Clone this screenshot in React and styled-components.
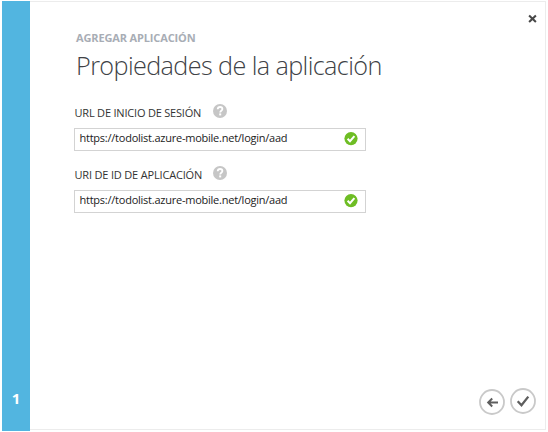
import React from "react";
import styled, { createGlobalStyle } from "styled-components";

const GlobalStyle = createGlobalStyle`
  * { box-sizing: border-box; }
  body { margin: 0; background: #fff; font-family: "Open Sans", "Noto Sans", sans-serif; }
`;

const Page = styled.div`
  width: 548px;
  height: 432px;
  padding: 1px 1px 1px 2px;
  display: flex;
  overflow: hidden;
`;

const StepRail = styled.aside`
  width: 28px;
  height: 430px;
  display: flex;
  flex-direction: column;
  justify-content: flex-end;
  align-items: center;
  padding-bottom: 23px;
  background: #52b5e0;
`;

const StepNumber = styled.span`
  font-family: "Noto Sans", sans-serif;
  font-size: 15px;
  line-height: 20px;
  font-weight: 700;
  color: #fff;
`;

const Dialog = styled.main`
  width: 516px;
  height: 429px;
  display: flex;
  flex-direction: column;
  border: solid #ececec;
  border-width: 1px 1px 1px 0;
`;

const TopBar = styled.div`
  display: flex;
  justify-content: flex-end;
  height: 27px;
  padding: 12px 8px 0 0;
`;

const IconButton = styled.button`
  display: flex;
  padding: 0;
  border: 0;
  background: none;
  height: fit-content;
  margin-bottom: ${(p) => p.$lift || 0}px;
`;

const Heading = styled.header`
  padding-left: 46px;
  height: 74px;
`;

const Eyebrow = styled.div`
  height: 18px;
  line-height: 18px;
  font-size: 11px;
  font-weight: 700;
  letter-spacing: -0.14px;
  color: #a8adb5;
  white-space: nowrap;
`;

const Title = styled.h1`
  margin: 0;
  height: 36px;
  line-height: 36px;
  font-size: 25.2px;
  font-weight: 300;
  letter-spacing: -0.6px;
  color: #404246;
  white-space: nowrap;
`;

const Field = styled.section`
  width: 292px;
  height: 62px;
  margin-left: 44px;
`;

const LabelRow = styled.div`
  display: flex;
  align-items: flex-start;
  height: 25px;
`;

const Label = styled.label`
  width: 139px;
  padding-left: 0.5px;
  line-height: 20px;
  font-size: 11px;
  letter-spacing: ${(p) => p.$tracking}px;
  color: #333;
  white-space: nowrap;
`;

const HelpSlot = styled.span`
  display: flex;
  padding-top: 1px;
`;

const InputBox = styled.div`
  display: flex;
  align-items: flex-start;
  justify-content: space-between;
  height: 23px;
  padding: 3px 7px 0 4px;
  border: 1px solid #d3d3d3;
`;

const Value = styled.span`
  line-height: 14px;
  margin-top: -1px;
  padding-left: 0.5px;
  font-size: 11px;
  letter-spacing: -0.24px;
  color: #222;
  white-space: nowrap;
`;

const Footer = styled.footer`
  display: flex;
  justify-content: flex-end;
  align-items: flex-end;
  gap: 5px;
  margin-top: auto;
  padding: 0 9px 14px 0;
`;

const HelpIcon = () => (
  <svg width="14" height="14" viewBox="0 0 14 14">
    <circle cx="7" cy="7" r="7" fill="#c6c6c6" />
    <path d="M4.7 5.3C4.8 3.6 5.7 3 7.1 3c1.4 0 2.3.8 2.3 2 0 1.7-2.2 1.7-2.2 3.4" fill="none" stroke="#fff" strokeWidth="1.8" />
    <rect x="6.2" y="9.4" width="2" height="2" fill="#fff" />
  </svg>
);

const ValidIcon = () => (
  <svg width="14" height="14" viewBox="0 0 14 14">
    <circle cx="7" cy="6.6" r="6.6" fill="#6ebd24" />
    <path d="M3.6 6.7 6 9.2 10.4 4.1" fill="none" stroke="#fff" strokeWidth="2" />
  </svg>
);

const CloseIcon = () => (
  <svg width="9" height="9" viewBox="0 0 9 9">
    <path d="M1.1 1.6 7.9 7.9M7.9 1.6 1.1 7.9" stroke="#484848" strokeWidth="2.1" />
  </svg>
);

const BackIcon = () => (
  <svg width="26" height="26" viewBox="0 0 26 26">
    <circle cx="13" cy="13" r="12" fill="#fff" stroke="#c9c9c9" strokeWidth="1.8" />
    <path d="M19 13.5H9.5M13.2 9.5 9.2 13.5l4 4" fill="none" stroke="#5e5e5e" strokeWidth="2" />
  </svg>
);

const DoneIcon = () => (
  <svg width="26" height="26" viewBox="0 0 26 26">
    <circle cx="13" cy="13" r="12" fill="#fff" stroke="#c9c9c9" strokeWidth="1.8" />
    <path d="M7.7 13.2 11.5 17.2 18.3 8.6" fill="none" stroke="#5e5e5e" strokeWidth="2.3" />
  </svg>
);

const fields = [
  { label: "URL DE INICIO DE SESIÓN", value: "https://todolist.azure-mobile.net/login/aad", tracking: -0.2 },
  { label: "URI DE ID DE APLICACIÓN", value: "https://todolist.azure-mobile.net/login/aad", tracking: -0.18 },
];

export default function App() {
  return (
    <Page>
      <GlobalStyle />
      <StepRail>
        <StepNumber>1</StepNumber>
      </StepRail>
      <Dialog>
        <TopBar>
          <IconButton aria-label="Cerrar"><CloseIcon /></IconButton>
        </TopBar>
        <Heading>
          <Eyebrow>AGREGAR APLICACIÓN</Eyebrow>
          <Title>Propiedades de la aplicación</Title>
        </Heading>
        {fields.map((f) => (
          <Field key={f.label}>
            <LabelRow>
              <Label $tracking={f.tracking}>{f.label}</Label>
              <HelpSlot><HelpIcon /></HelpSlot>
            </LabelRow>
            <InputBox>
              <Value>{f.value}</Value>
              <ValidIcon />
            </InputBox>
          </Field>
        ))}
        <Footer>
          <IconButton aria-label="Anterior"><BackIcon /></IconButton>
          <IconButton aria-label="Completar" $lift={1}><DoneIcon /></IconButton>
        </Footer>
      </Dialog>
    </Page>
  );
}
